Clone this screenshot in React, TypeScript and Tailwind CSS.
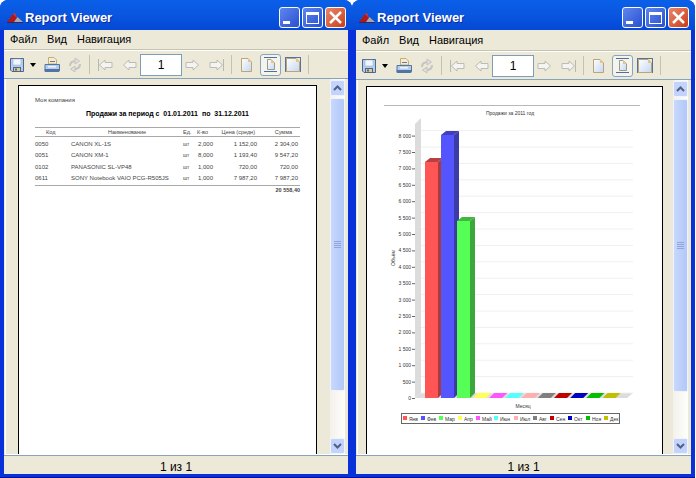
import type { ReactNode } from "react";

const rows = [
  { code: "0050", name: "CANON XL-1S", unit: "шт", qty: "2,000", price: "1 152,00", sum: "2 304,00" },
  { code: "0051", name: "CANON XM-1", unit: "шт", qty: "8,000", price: "1 193,40", sum: "9 547,20" },
  { code: "0102", name: "PANASONIC SL-VP48", unit: "шт", qty: "1,000", price: "720,00", sum: "720,00" },
  { code: "0611", name: "SONY Notebook VAIO PCG-R505JS", unit: "шт", qty: "1,000", price: "7 987,20", sum: "7 987,20" },
];

const months = [
  { name: "Янв", color: "#ff5555", x: 403 },
  { name: "Фев", color: "#5555ff", x: 421 },
  { name: "Мар", color: "#55ff55", x: 439 },
  { name: "Апр", color: "#ffff55", x: 458 },
  { name: "Май", color: "#ff55ff", x: 476 },
  { name: "Июн", color: "#55ffff", x: 494 },
  { name: "Июл", color: "#ffafaf", x: 514 },
  { name: "Авг", color: "#808080", x: 533 },
  { name: "Сен", color: "#c00000", x: 550 },
  { name: "Окт", color: "#0000c0", x: 568 },
  { name: "Ноя", color: "#00c000", x: 586 },
  { name: "Дек", color: "#c0c000", x: 604 },
];

const Logo = () => (
  <svg width="16" height="10" viewBox="0 0 16 10">
    <path d="M0 9 L6 1 L10 5 L7 9 Z" fill="#b01818" />
    <path d="M6 1 L8 0 L10 5 Z" fill="#e03030" />
    <path d="M7 9 L10.500 4 L16 9 Z" fill="#a8a8a8" />
    <path d="M0 9 H16 V10 H0 Z" fill="#30285a" />
  </svg>
);

const SaveIcon = () => (
  <svg width="16" height="16" viewBox="0 0 16 16">
    <path d="M1.500 1.500 H14.500 V14.500 H3 L1.500 13 Z" fill="#b9cdea" stroke="#49678f" />
    <rect x="4" y="2" width="8" height="6" fill="#f2f6fc" stroke="#8fa8c8" strokeWidth="0.5" />
    <rect x="4.500" y="10.500" width="7" height="4" fill="#e2c98d" stroke="#49678f" />
    <rect x="6" y="11.500" width="2" height="2" fill="#49678f" />
  </svg>
);

const PrintIcon = () => (
  <svg width="16" height="16" viewBox="0 0 16 16">
    <path d="M4.500 0.500 H10 L12.500 3 V7 H4.500 Z" fill="#f6ecd2" stroke="#c9ac70" />
    <rect x="6" y="4" width="5" height="1" fill="#5d7ba6" />
    <path d="M1 7.500 H15.500 V13.500 H1 Z" fill="#b9cdea" stroke="#4f75a6" />
    <rect x="0.500" y="12" width="15" height="3" rx="1" fill="#4f75a6" />
    <rect x="4" y="9" width="8" height="1.500" fill="#eef3fb" />
  </svg>
);

const RefreshIcon = () => (
  <svg width="16" height="16" viewBox="0 0 16 16" fill="none" stroke="#c4c4c0" strokeWidth="2">
    <path d="M3 9 C3 5 6 4 9 4" />
    <path d="M8 1 L12.500 4 L8 7 Z" fill="#e0e0dc" strokeWidth="1" />
    <path d="M13 7 C13 11 10 12 7 12" />
    <path d="M8 9 L3.500 12 L8 15 Z" fill="#e0e0dc" strokeWidth="1" />
  </svg>
);

const ArrowIcon = ({ right, bar }: { right?: boolean; bar?: boolean }) => (
  <svg width="16" height="16" viewBox="0 0 16 16" style={right ? { transform: "scaleX(-1)" } : undefined}>
    {bar && <rect x="1" y="2" width="1" height="12" fill="#b8b8b2" />}
    <path d="M2.500 8 L8 3 V5.500 H15 V10.500 H8 V13 Z" fill="#f4f4f0" stroke="#bcbcb6" />
  </svg>
);

const PageIcon = ({ w = 11, h = 14, stroke = "#b9a578" }: { w?: number; h?: number; stroke?: string }) => (
  <svg width={w} height={h} viewBox={`0 0 ${w} ${h}`}>
    <defs>
      <linearGradient id="pg" x1="0" y1="0" x2="1" y2="1">
        <stop offset="0" stopColor="#ffffff" />
        <stop offset="1" stopColor="#c5d6f2" />
      </linearGradient>
    </defs>
    <path d={`M0.500 0.500 H${w - 4} L${w - 0.5} 4 V${h - 0.5} H0.500 Z`} fill="url(#pg)" stroke={stroke} />
    <path d={`M${w - 4} 0.500 V4 H${w - 0.5} Z`} fill="#e6c67f" />
  </svg>
);

const Separator = ({ className }: { className: string }) => <div className={`h-[19px] w-px bg-[#c5c2b0] ${className}`} />;

const Toolbar = () => (
  <div className="flex h-[29px] items-center border-t border-white border-b border-b-[#8aa3bd] pl-[5px] bg-[#ece9d8]">
    <SaveIcon />
    <svg width="6" height="4" viewBox="0 0 6 4" className="ml-[5px]">
      <path d="M0 0 H6 L3 4 Z" fill="#000" />
    </svg>
    <div className="ml-[8px]"><PrintIcon /></div>
    <div className="ml-[7px]"><RefreshIcon /></div>
    <Separator className="ml-[6px]" />
    <div className="ml-[7px]"><ArrowIcon bar /></div>
    <div className="ml-[8px]"><ArrowIcon /></div>
    <div className="ml-[3px] flex h-[22px] w-[42px] items-center justify-center border border-[#7f9db9] bg-white font-['Liberation_Sans',sans-serif] text-[12px] text-black">
      1
    </div>
    <div className="ml-[3px]"><ArrowIcon right /></div>
    <div className="ml-[8px]"><ArrowIcon right bar /></div>
    <Separator className="ml-[6px]" />
    <div className="ml-[9px] flex"><PageIcon /></div>
    <div className="ml-[8px] flex h-[22px] w-[21px] flex-col items-center justify-center rounded-[3px] border border-[#8aa3bd] bg-[#f4f3ec]">
      <div className="h-px w-[13px] bg-[#4f6f9c]" />
      <div className="my-px flex"><PageIcon w={8} h={11} stroke="#9a9a8c" /></div>
      <div className="h-px w-[13px] bg-[#4f6f9c]" />
    </div>
    <div className="ml-[4px] flex border border-b-0 border-[#56739c]">
      <PageIcon w={14} h={14} />
    </div>
    <Separator className="ml-[7px]" />
  </div>
);

const Chevron = ({ down }: { down?: boolean }) => (
  <svg width="9" height="6" viewBox="0 0 9 6" fill="none" stroke="#4d6185" strokeWidth="2">
    <path d={down ? "M1 1 L4.500 4.500 L8 1" : "M1 5 L4.500 1.500 L8 5"} />
  </svg>
);

const ScrollButton = ({ down }: { down?: boolean }) => (
  <div className="flex h-[16px] w-[15px] items-center justify-center rounded-[2px] border border-[#eef3fd] bg-[#c3d3fb]">
    <Chevron down={down} />
  </div>
);

const Scrollbar = () => (
  <div className="flex w-[15px] flex-col bg-gradient-to-r from-[#f3f1ec] to-[#fefefb] pt-[1px]">
    <ScrollButton />
    <div className="mt-[2px] flex h-[293px] flex-col items-center justify-center gap-px rounded-[2px] border border-[#eef3fd] bg-gradient-to-r from-[#c9d8fc] via-[#bdcffb] to-[#b3c8f8]">
      <div className="h-px w-[7px] bg-[#8ea6dc]" />
      <div className="h-px w-[7px] bg-[#8ea6dc]" />
      <div className="h-px w-[7px] bg-[#8ea6dc]" />
      <div className="h-px w-[7px] bg-[#8ea6dc]" />
    </div>
    <div className="flex-1" />
    <ScrollButton down />
  </div>
);

const TitleButton = ({ children, close }: { children: ReactNode; close?: boolean }) => (
  <div
    className={`flex h-[21px] w-[21px] items-center justify-center rounded-[3px] border border-white ${
      close ? "bg-gradient-to-br from-[#e8876a] to-[#c93a12]" : "bg-gradient-to-br from-[#5f86ee] to-[#2a4fd0]"
    }`}
  >
    {children}
  </div>
);

const Window = ({
  width,
  menu,
  page,
  children,
}: {
  width: string;
  menu: string;
  page: string;
  children: ReactNode;
}) => (
  <div className={`flex h-[478px] ${width} flex-col overflow-hidden rounded-t-[8px] bg-[#0831d9]`}>
    <div className="flex h-[30px] items-center bg-gradient-to-b from-[#0a5fe8] via-[#0a56e0] to-[#0448d4] pl-[7px] pr-[6px] pt-[5px]">
      <Logo />
      <span className="ml-[2px] font-['Liberation_Sans',sans-serif] text-[13px] font-bold text-white [text-shadow:1px_1px_0_#0a2a9a]">
        Report Viewer
      </span>
      <div className="ml-auto flex gap-[2px]">
        <TitleButton>
          <div className="mt-[9px] mr-[6px] h-[3px] w-[7px] bg-white" />
        </TitleButton>
        <TitleButton>
          <div className="h-[12px] w-[13px] border border-t-[3px] border-white" />
        </TitleButton>
        <TitleButton close>
          <svg width="13" height="13" viewBox="0 0 13 13" stroke="#fff" strokeWidth="2.500">
            <path d="M1 1 L12 12 M12 1 L1 12" />
          </svg>
        </TitleButton>
      </div>
    </div>
    <div className="mx-[4px] flex h-[444px] flex-col bg-[#ece9d8]">
      <div className={`flex ${menu} shrink-0 items-center gap-[10px] border-b border-[#c5c2b0] pl-[6px] font-['Liberation_Sans',sans-serif] text-[11px] text-black`}>
        <span>Файл</span>
        <span>Вид</span>
        <span>Навигация</span>
      </div>
      <Toolbar />
      <div className="ml-px flex min-h-0 flex-1 border-l border-b border-white">
        <div className={`${page} mt-[6px] border border-b-0 border-black bg-white`}>{children}</div>
        <Scrollbar />
      </div>
      <div className="flex h-[19px] shrink-0 items-center justify-center border-t border-[#8aa3bd] pt-[3px] font-['Liberation_Sans',sans-serif] text-[12px] text-black">
        1 из 1
      </div>
    </div>
    <div className="flex-1 border-b border-[#00138c]" />
  </div>
);

const Report = () => (
  <div className="flex flex-col pl-[16px] pr-[16px] pt-[11px] font-['Liberation_Sans',sans-serif] text-[6px] leading-[6px] text-[#444]">
    <div className="leading-[7px]">Моя компания</div>
    <div className="mt-[5px] text-center text-[7px] font-bold leading-[9px] text-black">
      Продажи за период с &nbsp;01.01.2011 &nbsp;по &nbsp;31.12.2011
    </div>
    <div className="mt-[9px] grid h-[10px] grid-cols-[36px_112px_14px_16px_44px_41px] items-center border-y border-[#a8a8a8] text-[5.500px]">
      <span className="pl-[11px]">Код</span>
      <span className="text-center">Наименование</span>
      <span>Ед.</span>
      <span>К-во</span>
      <span className="pr-[2px] text-right">Цена (средн)</span>
      <span className="pr-[6px] text-right">Сумма</span>
    </div>
    <div className="mt-[1px] flex flex-col">
      {rows.map((row) => (
        <div key={row.code} className="grid h-[11.500px] grid-cols-[36px_112px_14px_16px_44px_41px] items-center">
          <span>{row.code}</span>
          <span>{row.name}</span>
          <span className="text-[5px]">{row.unit}</span>
          <span className="text-right">{row.qty}</span>
          <span className="text-right">{row.price}</span>
          <span className="text-right">{row.sum}</span>
        </div>
      ))}
    </div>
    <div className="mt-[1px] border-t border-[#a8a8a8] pt-[1px] text-right text-[5.500px] font-bold">20 558,40</div>
  </div>
);

const Bar = ({ x, top, fill, side, cap }: { x: number; top: number; fill: string; side: string; cap: string }) => (
  <g>
    <rect x={x} y={top} width="13" height={398 - top} fill={fill} />
    <path d={`M${x + 13} ${top} L${x + 18} ${top - 4} V393 L${x + 13} 398 Z`} fill={side} />
    <path d={`M${x} ${top} L${x + 5} ${top - 4} H${x + 18} L${x + 13} ${top} Z`} fill={cap} />
  </g>
);

const Chart = () => {
  const ticks = Array.from({ length: 17 }, (_, i) => i * 500);
  const y = (v: number) => 398 - (v / 500) * 16.4;
  return (
    <svg width="295" height="367" viewBox="367 87 295 367" className="block" fontFamily="Liberation Sans, sans-serif" fontSize="5" fill="#333">
      <rect x="384" y="105" width="256" height="1" fill="#b8b8b8" />
      <text x="510" y="115" textAnchor="middle">Продажи за 2011 год</text>
      <path d="M415 124 L421 118 V393 L415 398 Z" fill="#dcdcdc" />
      <path d="M415 398 L421 393 H633 L627 398 Z" fill="#dcdcdc" />
      {ticks.map((t) => (
        <g key={t}>
          <line x1="421" x2="633" y1={y(t) - 5} y2={y(t) - 5} stroke="#f0f0f0" />
          <line x1="412" x2="415" y1={y(t) + 0.5} y2={y(t) + 0.5} stroke="#666" />
          <text x="411" y={y(t) + 2} textAnchor="end">
            {t >= 1000 ? `${Math.floor(t / 1000)} ${t % 1000 === 0 ? "000" : "500"}` : t}
          </text>
        </g>
      ))}
      {months.slice(3).map((m, i) => {
        const x = 473 + i * 16.2;
        return <path key={m.name} d={`M${x} 398 L${x + 5} 393 H${x + 18} L${x + 13} 398 Z`} fill={m.color} />;
      })}
      <Bar x={425} top={162} fill="#ff5555" side="#a83c3c" cap="#b84040" />
      <Bar x={441} top={135} fill="#5555ff" side="#3c3ca8" cap="#4040b8" />
      <Bar x={457} top={221} fill="#55ff55" side="#3ca83c" cap="#40b840" />
      <text x="523" y="408" textAnchor="middle">Месяц</text>
      <text transform="translate(395 258) rotate(-90)" textAnchor="middle">Объём</text>
      <rect x="401.500" y="413.500" width="218" height="10" fill="#fff" stroke="#666" />
      {months.map((m) => (
        <g key={m.name}>
          <rect x={m.x} y="416" width="4" height="4" fill={m.color} />
          <text x={m.x + 6} y="420.500">{m.name}</text>
        </g>
      ))}
    </svg>
  );
};

export default function App() {
  return (
    <div className="flex h-[478px] w-[696px] overflow-hidden bg-white">
      <Window width="w-[352px]" menu="h-[20px]" page="ml-[12px] mr-[13px] w-[299px]">
        <Report />
      </Window>
      <Window width="w-[343px]" menu="h-[21px]" page="ml-[8px] mr-[10px] w-[297px]">
        <Chart />
      </Window>
    </div>
  );
}
